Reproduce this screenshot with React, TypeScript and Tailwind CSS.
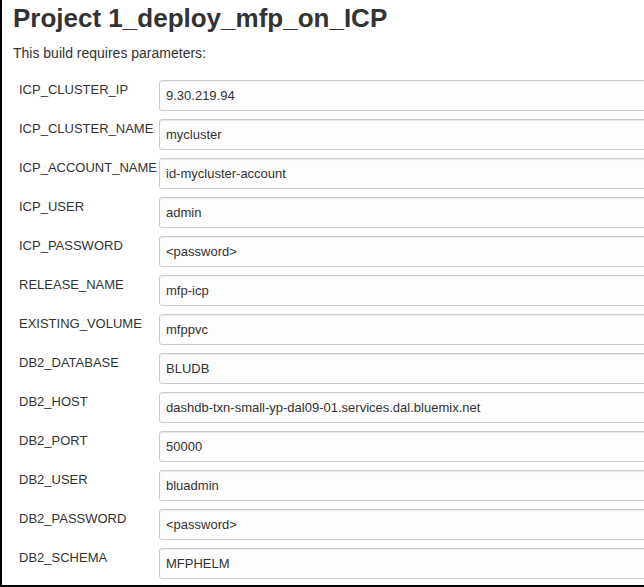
import React from "react";

const rows: [string, string][] = [
  ["ICP_CLUSTER_IP", "9.30.219.94"],
  ["ICP_CLUSTER_NAME", "mycluster"],
  ["ICP_ACCOUNT_NAME", "id-mycluster-account"],
  ["ICP_USER", "admin"],
  ["ICP_PASSWORD", "<password>"],
  ["RELEASE_NAME", "mfp-icp"],
  ["EXISTING_VOLUME", "mfppvc"],
  ["DB2_DATABASE", "BLUDB"],
  ["DB2_HOST", "dashdb-txn-small-yp-dal09-01.services.dal.bluemix.net"],
  ["DB2_PORT", "50000"],
  ["DB2_USER", "bluadmin"],
  ["DB2_PASSWORD", "<password>"],
  ["DB2_SCHEMA", "MFPHELM"],
];

export default function App() {
  return (
    <div
      className="w-[644px] h-[587px] overflow-hidden bg-white border-l-2 border-b-2 border-black text-[#333]"
      style={{ fontFamily: '"Liberation Sans", Arial, sans-serif' }}
    >
      <div className="pl-[11px] pt-[3px]">
        <h1 className="text-[26px] leading-[30px] font-bold m-0">Project 1_deploy_mfp_on_ICP</h1>
        <p className="text-[14px] leading-[20px] mt-[10px]">This build requires parameters:</p>
      </div>
      <div className="mt-[17px] flex flex-col gap-[8px] pl-[17px]">
        {rows.map(([label, value]) => (
          <div key={label} className="flex items-start h-[31px]">
            <div className="w-[140px] shrink-0 text-[13px] leading-[18px] pt-[1px]">{label}</div>
            <div className="w-[520px] shrink-0 h-[31px] border border-[#ccc] rounded-[3px] bg-[#fdfdfd] shadow-[inset_0_1px_1px_rgba(0,0,0,0.075)] flex items-center pl-[6px] text-[13px]">
              {value}
            </div>
          </div>
        ))}
      </div>
    </div>
  );
}
